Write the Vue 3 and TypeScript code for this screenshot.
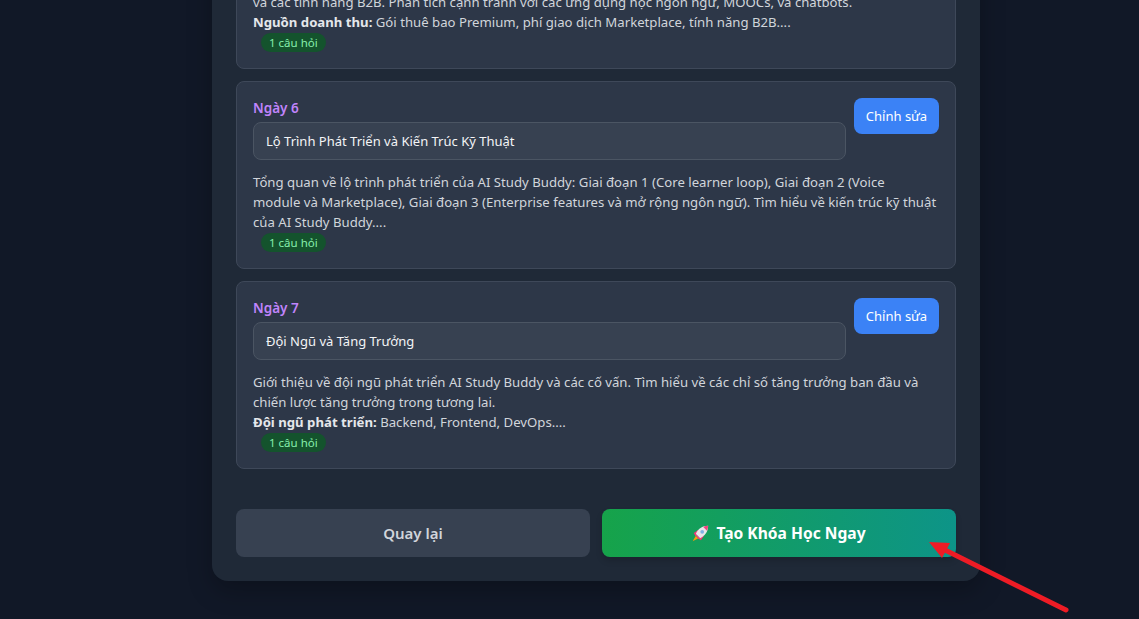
<script setup lang="ts">
import { ref } from "vue";

interface DayCard {
  day: string
  title: string
  lines: string
  strong?: string
  tail?: string
}

const days = ref<DayCard[]>([
  {
    day: 'Ngày 5',
    title: 'Thị Trường và Mô Hình Kinh Doanh',
    lines: 'Khám phá thị trường mục tiêu và mô hình kinh doanh của AI Study Buddy, bao gồm Premium, Marketplace\nvà các tính năng B2B. Phân tích cạnh tranh với các ứng dụng học ngôn ngữ, MOOCs, và chatbots.',
    strong: 'Nguồn doanh thu:',
    tail: 'Gói thuê bao Premium, phí giao dịch Marketplace, tính năng B2B....'
  },
  {
    day: 'Ngày 6',
    title: 'Lộ Trình Phát Triển và Kiến Trúc Kỹ Thuật',
    lines: 'Tổng quan về lộ trình phát triển của AI Study Buddy: Giai đoạn 1 (Core learner loop), Giai đoạn 2 (Voice\nmodule và Marketplace), Giai đoạn 3 (Enterprise features và mở rộng ngôn ngữ). Tìm hiểu về kiến trúc kỹ thuật\ncủa AI Study Buddy....'
  },
  {
    day: 'Ngày 7',
    title: 'Đội Ngũ và Tăng Trưởng',
    lines: 'Giới thiệu về đội ngũ phát triển AI Study Buddy và các cố vấn. Tìm hiểu về các chỉ số tăng trưởng ban đầu và chiến lược tăng trưởng trong tương lai.',
    strong: 'Đội ngũ phát triển:',
    tail: 'Backend, Frontend, DevOps....'
  }
])
</script>

<template>
  <div class="page">
    <div class="panel">
      <div class="cards">
        <div v-for="d in days" :key="d.day" class="card">
          <div class="head">
            <div class="fields">
              <div class="day">{{ d.day }}</div>
              <input class="title" :value="d.title">
            </div>
            <button class="edit">Chỉnh sửa</button>
          </div>
          <p class="desc">
            {{ d.lines }}
            <template v-if="d.strong"><br><strong>{{ d.strong }}</strong> {{ d.tail }}</template>
          </p>
          <span class="badge">1 câu hỏi</span>
        </div>
      </div>
      <div class="actions">
        <button class="back">Quay lại</button>
        <button class="create">
          <svg class="rocket" viewBox="0 0 20 20" width="17" height="17">
            <path d="M4.5 12.5 L0.8 19.2 L7.5 15.5 Z" fill="#f59e0b"/>
            <path d="M2 9.5 L7 6 L8 11 L4 13 Z" fill="#ec3a78"/>
            <path d="M10.5 18 L14 13 L9 12 L7 16 Z" fill="#ec3a78"/>
            <path d="M19 1 C12 1.2 7 4.5 4.5 10.5 L9.5 15.5 C15.5 13 18.8 8 19 1 Z" fill="#e8e6ea"/>
            <path d="M19 1 C16.8 1.1 14.9 1.5 13.2 2.3 L17.7 6.8 C18.5 5.1 18.9 3.2 19 1 Z" fill="#f0447f"/>
            <path d="M4.5 10.5 L9.5 15.5 L8 16.2 L3.8 12 Z" fill="#f0447f"/>
            <circle cx="12" cy="8" r="2.2" fill="#7fb2e5"/>
          </svg>
          Tạo Khóa Học Ngay
        </button>
      </div>
    </div>

    <svg class="arrow" viewBox="0 0 160 90" width="160" height="90">
      <line x1="145" y1="77" x2="22" y2="16" stroke="#ee1c25" stroke-width="5" stroke-linecap="round"/>
      <path d="M8 9 L29 10 L21 25 Z" fill="#ee1c25"/>
    </svg>
  </div>
</template>

<style scoped>
.page {
  position: relative;
  height: 619px;
  overflow: hidden;
  display: flex;
  flex-direction: column;
  justify-content: flex-end;
  align-items: center;
  padding: 0 159px 38px 212px;
  box-sizing: border-box;
  background: #111827;
  font-family: "Noto Sans", "Open Sans", sans-serif;
}

.panel {
  flex-shrink: 0;
  width: 768px;
  box-sizing: border-box;
  padding: 24px 24px 24px;
  background: #1f2937;
  border-radius: 16px;
  box-shadow: 0 10px 25px rgba(0, 0, 0, 0.25);
}

.cards {
  display: flex;
  flex-direction: column;
  gap: 12px;
}

.card {
  padding: 16px;
  background: #2d3748;
  border: 1px solid #3e4859;
  border-radius: 8px;
}

.head {
  display: flex;
  align-items: flex-start;
  gap: 8px;
}

.fields {
  flex: 1;
}

.day {
  font-size: 13.5px;
  line-height: 20px;
  font-weight: 600;
  color: #c084fc;
  margin-bottom: 4px;
}

.title {
  display: block;
  width: 100%;
  height: 38px;
  box-sizing: border-box;
  padding: 0 12px;
  background: #374151;
  border: 1px solid #4b5563;
  border-radius: 8px;
  color: #f3f4f6;
  font: inherit;
  font-size: 13px;
}

.edit {
  width: 85px;
  height: 36px;
  border: none;
  border-radius: 8px;
  background: #3b82f6;
  color: #fff;
  font: inherit;
  font-size: 13px;
}

.desc {
  margin: 12px 0 1px;
  font-size: 13.18px;
  line-height: 20px;
  color: #d1d5db;
  white-space: pre-line;
}

.desc strong {
  color: #e5e7eb;
  font-weight: 700;
}

.badge {
  display: block;
  width: fit-content;
  margin-left: 8px;
  padding: 0 8px;
  height: 19px;
  line-height: 19px;
  border-radius: 10px;
  background: #14532d;
  color: #86efac;
  font-size: 11.5px;
}

.actions {
  display: flex;
  gap: 12px;
  margin-top: 40px;
}

.actions button {
  flex: 1;
  height: 48px;
  border: none;
  border-radius: 8px;
  font: inherit;
  font-size: 15px;
  font-weight: 600;
}

.back {
  background: #374151;
  color: #d1d5db;
}

.create {
  display: flex;
  align-items: center;
  justify-content: center;
  gap: 7px;
  background: linear-gradient(90deg, #16a34a, #0d9488);
  color: #fff;
  box-shadow: 0 4px 6px rgba(0, 0, 0, 0.15);
}

.actions .create {
  font-size: 15.6px;
  font-weight: 700;
}

.arrow {
  position: absolute;
  left: 921px;
  top: 533px;
}
</style>

<style>
html, body {
  margin: 0;
  background: #111827;
  overflow: hidden;
}
</style>
